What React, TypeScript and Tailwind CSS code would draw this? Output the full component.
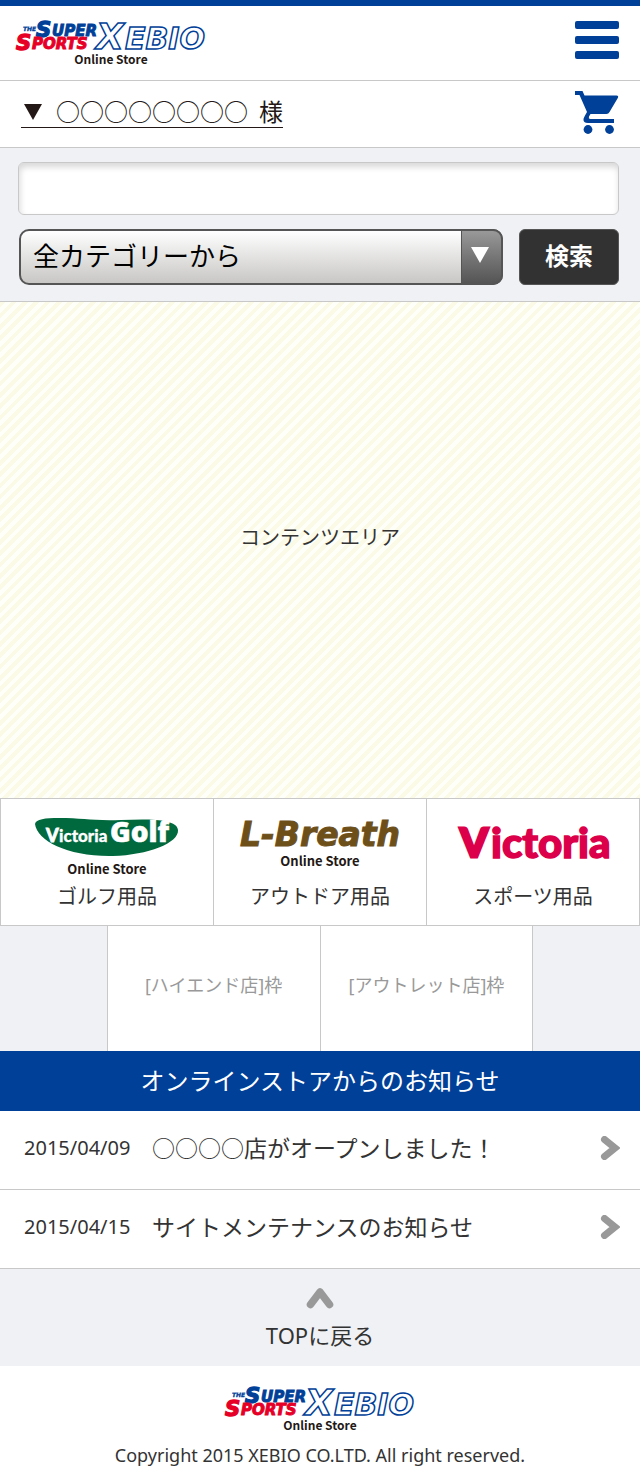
import React from "react";

function OnlineStore({ small = false }: { small?: boolean }) {
  return (
    <span
      className={`font-['Noto_Sans_CJK_JP',sans-serif] font-bold leading-4 text-[#231815] ${small ? "text-xs" : "text-[13px]"}`}
    >
      Online Store
    </span>
  );
}

function XebioLogo() {
  return (
    <span className="flex w-[190px] flex-col items-center">
      <svg viewBox="0 0 190 31" className="block h-[31px] w-[190px] overflow-visible" role="img" aria-label="The Super Sports Xebio">
        <g className="font-['DejaVu_Sans',sans-serif] font-bold italic">
          <g fill="#004098" stroke="#004098">
            <text x="7" y="11" fontSize="6" strokeWidth="0.3">THE</text>
            <text x="20" y="17" fontSize="21" strokeWidth="1.400">S</text>
            <text x="36" y="16" fontSize="15" strokeWidth="1">UPER</text>
          </g>
          <g fill="#e60027" stroke="#e60027">
            <text x="0" y="30" fontSize="21" strokeWidth="1.400">S</text>
            <text x="16" y="29" fontSize="15" strokeWidth="1">PORTS</text>
          </g>
          <g fill="#fff" stroke="#004098" strokeWidth="1.500">
            <text x="109" y="29" fontSize="30">EBIO</text>
            <text x="80" y="29" fontSize="36">X</text>
          </g>
        </g>
      </svg>
      <OnlineStore small />
    </span>
  );
}

function GolfLogo() {
  return (
    <span className="flex flex-col items-center">
      <svg viewBox="0 0 144 44" className="block h-11 w-36 overflow-visible" role="img" aria-label="Victoria Golf">
        <path d="M0 7C1 2 10 1 24 1C48 1 57 4 86 3C111 2 142 1 143 13C144 26 113 38 78 39C34 40 2 24 0 7Z" fill="#00693e" />
        <g fill="#fff" stroke="#fff">
          <text x="11" y="25" fontSize="18" strokeWidth="0.8" className="font-['Lato',sans-serif] font-black">V</text>
          <text x="24" y="25" fontSize="17" strokeWidth="0.3" className="font-['Lato',sans-serif] font-black">ictoria</text>
          <text x="75" y="25" fontSize="28" strokeWidth="0.5" className="font-['Open_Sans',sans-serif] font-extrabold">Golf</text>
        </g>
      </svg>
      <OnlineStore />
    </span>
  );
}

function BreathLogo() {
  return (
    <span className="flex flex-col items-center">
      <svg viewBox="0 0 164 36" className="block h-9 w-[164px] overflow-visible" role="img" aria-label="L-Breath">
        <text x="2" y="29" fontSize="33" fill="#6d4f19" stroke="#6d4f19" strokeWidth="1" className="font-['DejaVu_Sans',sans-serif] font-bold italic">L-Breath</text>
      </svg>
      <OnlineStore />
    </span>
  );
}

function VictoriaLogo() {
  return (
    <svg viewBox="0 0 154 36" className="block h-9 w-[154px] overflow-visible" role="img" aria-label="Victoria">
      <g fill="#dc004b" stroke="#dc004b" className="font-['Lato',sans-serif] font-black">
        <text x="4" y="32" fontSize="40" strokeWidth="3">V</text>
        <text x="35" y="33" fontSize="42" strokeWidth="1.500">ictoria</text>
      </g>
    </svg>
  );
}

function Chevron({ up = false }: { up?: boolean }) {
  return up ? (
    <svg viewBox="0 0 28 22" className="h-[22px] w-7" aria-hidden="true">
      <path d="M4.500 17.500 14 5l9.500 12.500" fill="none" stroke="#999" strokeWidth="7.500" strokeLinecap="round" strokeLinejoin="round" />
    </svg>
  ) : (
    <svg viewBox="0 0 20 24" className="h-6 w-5 shrink-0" aria-hidden="true">
      <path d="M4.500 3.500 15 12 4.500 20.500" fill="none" stroke="#999" strokeWidth="7" strokeLinecap="round" strokeLinejoin="miter" />
    </svg>
  );
}

const shops = [
  { name: "ゴルフ用品", logo: <GolfLogo />, pad: "pt-[18px]" },
  { name: "アウトドア用品", logo: <BreathLogo />, pad: "pt-[18px]" },
  { name: "スポーツ用品", logo: <VictoriaLogo />, pad: "pt-[26px]" },
];

const news = [
  { date: "2015/04/09", title: "○○○○店がオープンしました！" },
  { date: "2015/04/15", title: "サイトメンテナンスのお知らせ" },
];

export default function App() {
  return (
    <div className="w-full bg-white font-['Noto_Sans','Noto_Sans_CJK_JP',sans-serif] text-[#333]">
      <header>
        <div className="flex h-[81px] items-start justify-between border-t-6 border-b border-t-[#004098] border-b-[#c8c8c8] pt-[14px] pr-[21px] pl-4">
          <a href="#top"><XebioLogo /></a>
          <button type="button" aria-label="メニュー" className="mt-px flex w-11 flex-col gap-[7px]">
            <span className="h-2 w-full rounded-xs bg-[#004098]" />
            <span className="h-2 w-full rounded-xs bg-[#004098]" />
            <span className="h-2 w-full rounded-xs bg-[#004098]" />
          </button>
        </div>
        <div className="flex h-[67px] items-start justify-between border-b border-[#c8c8c8] pt-[9px] pr-[21px] pl-[21px]">
          <a href="#account" className="mt-1 flex h-[34px] items-center gap-[11px] border-b border-[#231815] font-['Noto_Sans_CJK_JP',sans-serif] text-2xl leading-8 text-[#231815]">
            <svg viewBox="0 0 24 20" className="h-5 w-6" aria-hidden="true"><path d="M3 3h18l-9 16z" fill="#231815" /></svg>
            <span>○○○○○○○○</span>
            <span>様</span>
          </a>
          <a href="#cart" aria-label="カート">
            <svg viewBox="0 0 44 44" className="h-11 w-11" fill="#004098" aria-hidden="true">
              <path d="M0 1h7.500l2 4.500H41.500q2.500 0 1.300 2.500L34.500 22q-1 2-3 2H15.500l-1.500 2.500q-.8 2 1 2.500h24v4H13q-5 0-4.500-4 .3-1.500 3.500-7L4.500 5H0z" />
              <circle cx="13" cy="39.500" r="4.400" />
              <circle cx="34.500" cy="39.500" r="4.400" />
            </svg>
          </a>
        </div>
      </header>

      <form className="border-b border-[#c8c8c8] bg-[#eff1f4] pt-[14px] pr-[21px] pb-4 pl-[18px]" onSubmit={(e) => e.preventDefault()}>
        <input
          type="text"
          aria-label="キーワード"
          className="block h-[53px] w-full rounded-md border border-[#c8c8c8] bg-white px-3 text-2xl shadow-[inset_1px_4px_6px_#d8d8d8]"
        />
        <div className="mt-[14px] flex gap-4">
          <div className="relative ml-px flex-1">
            <select
              aria-label="カテゴリー"
              className="h-14 w-full appearance-none rounded-[10px] border-2 border-[#555] bg-linear-to-b from-white to-[#c8c7c5] pb-1 pl-3 font-['Noto_Sans_CJK_JP',sans-serif] text-[26px] leading-9 text-black"
            >
              <option>全カテゴリーから</option>
            </select>
            <span className="pointer-events-none absolute inset-y-0 right-0 flex w-[42px] items-center justify-center rounded-r-[10px] border-2 border-l border-[#555] bg-linear-to-b from-[#999] to-[#555] pr-1 pb-1">
              <svg viewBox="0 0 20 18" className="h-[18px] w-5" aria-hidden="true"><path d="M1 1h18l-9 16z" fill="#fff" /></svg>
            </span>
          </div>
          <button type="submit" className="h-14 w-[100px] rounded-md border border-[#555] bg-[#323232] pb-1 font-['Noto_Sans_CJK_JP',sans-serif] text-2xl font-bold text-white">
            検索
          </button>
        </div>
      </form>

      <main className="flex h-[496px] items-center justify-center bg-[repeating-linear-gradient(135deg,#fafae6_0px,#fafae6_4px,#fffffa_4px,#fffffa_8px)] pb-6">
        <p className="text-xl">コンテンツエリア</p>
      </main>

      <nav className="bg-[#eff1f4]">
        <div className="grid grid-cols-3 border-y border-l border-[#c8c8c8] bg-white">
          {shops.map((s) => (
            <a key={s.name} href="#shop" className={`flex h-[126px] flex-col items-center justify-between border-r border-[#c8c8c8] pb-[14px] ${s.pad}`}>
              {s.logo}
              <span className="text-xl leading-7">{s.name}</span>
            </a>
          ))}
        </div>
        <div className="mx-auto grid w-2/3 grid-cols-2 border-l border-[#c8c8c8] bg-white text-lg text-[#999]">
          <div className="flex h-[125px] items-center justify-center border-r border-[#c8c8c8] pb-2">[ハイエンド店]枠</div>
          <div className="flex h-[125px] items-center justify-center border-r border-[#c8c8c8] pb-2">[アウトレット店]枠</div>
        </div>
      </nav>

      <section>
        <h2 className="flex h-[60px] items-center justify-center bg-[#004098] text-2xl text-white">オンラインストアからのお知らせ</h2>
        <ul>
          {news.map((n) => (
            <li key={n.date} className="border-b border-[#c8c8c8]">
              <a href="#news" className="flex h-[78px] items-center pr-5 pb-1 pl-6">
                <time className="w-32 text-xl leading-8">{n.date}</time>
                <span className="flex-1 pb-0.5 font-['Noto_Sans_CJK_JP',sans-serif] text-[23px] leading-8">{n.title}</span>
                <Chevron />
              </a>
            </li>
          ))}
        </ul>
      </section>

      <a href="#top" className="flex h-[97px] flex-col items-center gap-2 bg-[#eff1f4] pt-[18px]">
        <Chevron up />
        <span className="text-[22px] leading-9">TOPに戻る</span>
      </a>

      <footer className="flex flex-col items-center pt-5 pb-2">
        <XebioLogo />
        <p className="mt-2 text-lg leading-7">Copyright 2015 XEBIO CO.LTD. All right reserved.</p>
      </footer>
    </div>
  );
}
